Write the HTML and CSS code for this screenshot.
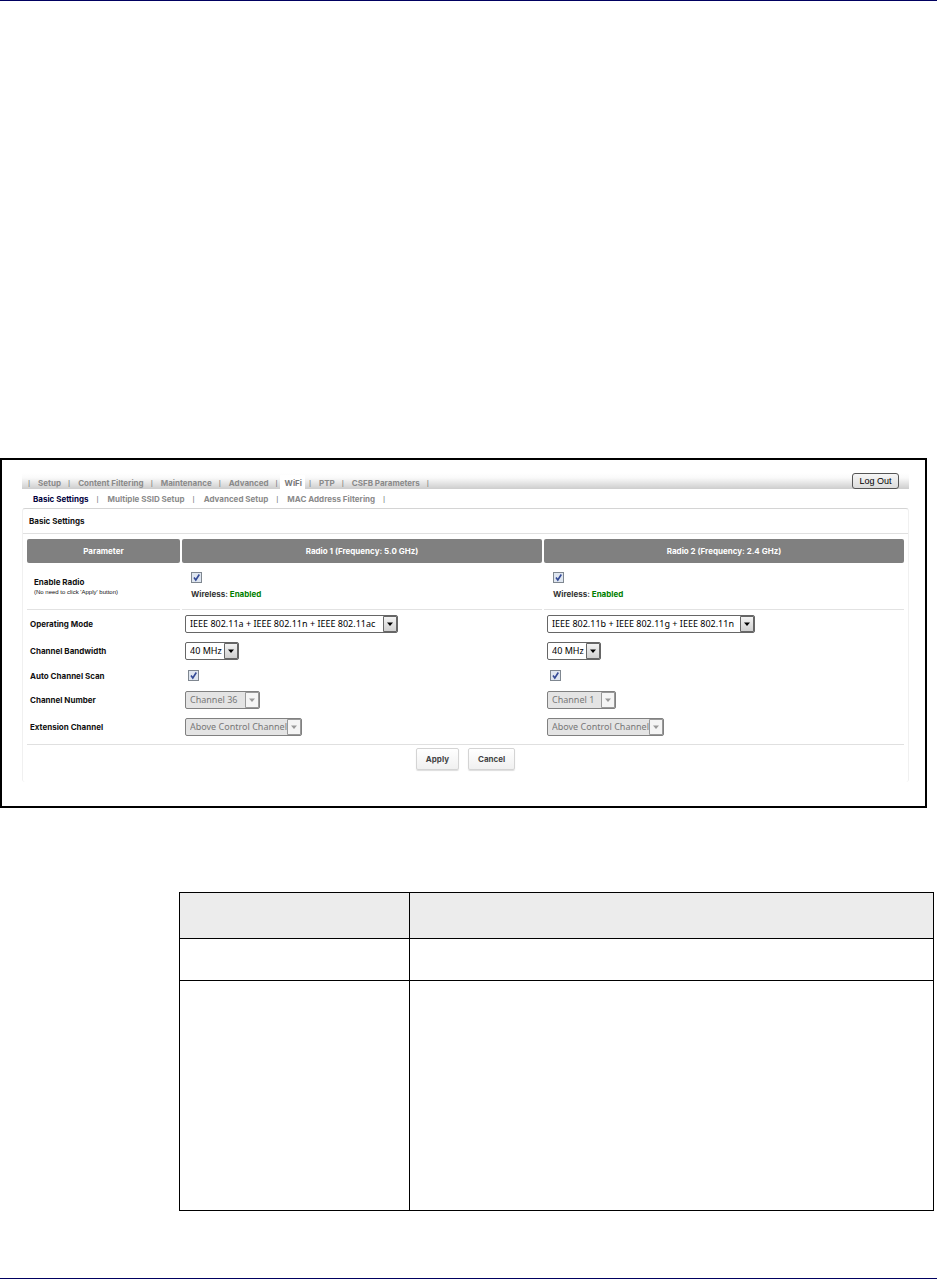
FILE: index.html
```html
<!DOCTYPE html>
<html lang="en">
<head>
<meta charset="utf-8">
<title>WiFi - Basic Settings</title>
<link rel="stylesheet" href="styles.css">
</head>
<body>
<main class="sheet">
  <section class="frame">
    <header class="topbar">
      <nav class="tabs" aria-label="Main">
        <a href="#">Setup</a>
        <a href="#">Content Filtering</a>
        <a href="#">Maintenance</a>
        <a href="#">Advanced</a>
        <a href="#" class="active">WiFi</a>
        <a href="#">PTP</a>
        <a href="#">CSFB Parameters</a>
      </nav>
      <button type="button" class="logout">Log Out</button>
    </header>
    <nav class="subtabs" aria-label="WiFi">
      <a href="#" class="current">Basic Settings</a>
      <a href="#">Multiple SSID Setup</a>
      <a href="#">Advanced Setup</a>
      <a href="#">MAC Address Filtering</a>
    </nav>
    <form class="panel">
      <h1 class="title">Basic Settings</h1>
      <table class="settings">
        <thead>
          <tr><th class="param">Parameter</th><th id="r1">Radio 1 (Frequency: 5.0 GHz)</th><th id="r2">Radio 2 (Frequency: 2.4 GHz)</th></tr>
        </thead>
        <tbody>
          <tr class="enable">
            <th id="en">Enable Radio<small>(No need to click 'Apply' button)</small></th>
            <td><input type="checkbox" class="check" aria-labelledby="en r1" checked><p>Wireless: <b>Enabled</b></p></td>
            <td><input type="checkbox" class="check" aria-labelledby="en r2" checked><p>Wireless: <b>Enabled</b></p></td>
          </tr>
          <tr class="first">
            <th id="om">Operating Mode</th>
            <td><select class="wide" aria-labelledby="om r1"><option>IEEE 802.11a + IEEE 802.11n + IEEE 802.11ac</option></select></td>
            <td><select class="wide" aria-labelledby="om r2"><option>IEEE 802.11b + IEEE 802.11g + IEEE 802.11n</option></select></td>
          </tr>
          <tr>
            <th id="bw">Channel Bandwidth</th>
            <td><select class="narrow" aria-labelledby="bw r1"><option>40 MHz</option></select></td>
            <td><select class="narrow" aria-labelledby="bw r2"><option>40 MHz</option></select></td>
          </tr>
          <tr class="scan">
            <th id="sc">Auto Channel Scan</th>
            <td><input type="checkbox" class="check" aria-labelledby="sc r1" checked></td>
            <td><input type="checkbox" class="check" aria-labelledby="sc r2" checked></td>
          </tr>
          <tr>
            <th id="cn">Channel Number</th>
            <td><select class="number" aria-labelledby="cn r1" disabled><option>Channel 36</option></select></td>
            <td><select class="digit" aria-labelledby="cn r2" disabled><option>Channel 1</option></select></td>
          </tr>
          <tr class="last">
            <th id="ex">Extension Channel</th>
            <td><select class="medium" aria-labelledby="ex r1" disabled><option>Above Control Channel</option></select></td>
            <td><select class="medium" aria-labelledby="ex r2" disabled><option>Above Control Channel</option></select></td>
          </tr>
        </tbody>
      </table>
      <div class="actions">
        <button type="button">Apply</button>
        <button type="button">Cancel</button>
      </div>
    </form>
  </section>
  <table class="reference">
    <thead><tr class="head"><th></th><th></th></tr></thead>
    <tbody>
      <tr class="short"><td></td><td></td></tr>
      <tr class="tall"><td></td><td></td></tr>
    </tbody>
  </table>
</main>
</body>
</html>
```

FILE: styles.css
```css
* { box-sizing: border-box; }

body {
  margin: 0;
  background: #fff;
  font: bold 8px/12px Inter, "Liberation Sans", sans-serif;
  color: #111;
}

.sheet {
  min-height: 100vh;
  padding: 457px 0 66px;
  border-top: 1px solid #000060;
  border-bottom: 1px solid #000060;
}

.frame {
  margin-right: 10px;
  padding: 13px 16px 24px 20px;
  border: 2px solid #000;
}

.topbar {
  display: flex;
  justify-content: space-between;
  align-items: flex-start;
  height: 16px;
  padding-right: 10px;
  background: linear-gradient(#fff 0, #fafafa 30%, #cdcdcd 100%);
}

.tabs, .subtabs { display: flex; }

.tabs a, .subtabs a {
  display: flex;
  color: #8a8a8a;
  text-decoration: none;
  white-space: nowrap;
}

.tabs { padding: 2px 0 0 6px; }
.tabs::before,
.tabs a::after,
.subtabs a::after {
  content: "|";
  font-family: "Liberation Sans", sans-serif;
  font-weight: normal;
  color: #777;
}
.tabs a, .tabs::before { height: 14px; line-height: 16px; }
.tabs a { padding-left: 8px; }
.tabs a::after { padding-left: 7px; }
.tabs .active {
  margin-left: 2px;
  padding-left: 5px;
  background: linear-gradient(90deg, #fff 25px, transparent 25px);
  color: #777;
}

.logout {
  height: 16px;
  width: 47px;
  padding: 0;
  border: 1px solid #555;
  border-radius: 3px;
  background: linear-gradient(#f6f6f6, #dcdcdc);
  font: 9px/12px "Liberation Sans", sans-serif;
  color: #000;
}

.subtabs { padding: 4px 0 3px 11px; }
.subtabs a { margin-right: 9px; }
.subtabs a::after { padding-left: 8px; }
.subtabs .current { color: #00003c; }

.panel {
  border: 1px solid #f0f0f0;
  border-top-color: #d4d4d4;
  border-bottom: 0;
  border-radius: 3px;
}

.title {
  margin: 0;
  padding: 6px;
  border-bottom: 1px solid #e0e0e0;
  font-size: 8px;
  line-height: 12px;
}

.settings {
  width: calc(100% - 4px);
  margin: 5px 2px 0;
  table-layout: fixed;
  border-collapse: separate;
  border-spacing: 2px 0;
}

.settings thead th {
  height: 24px;
  padding: 0;
  border-radius: 2px;
  background: #808080;
  color: #fff;
}
.settings .param { width: 153px; }

.settings tbody th, .settings td { padding: 0 0 0 3px; height: 26px; text-align: left; }
.settings .enable th, .settings .enable td {
  height: 47px;
  padding-left: 7px;
  border-bottom: 1px solid #e2e2e2;
}
.settings .enable td { padding-left: 9px; }
.settings .enable p { margin: 5px 0 0; color: #333; }
.settings b { font-weight: 700; color: #008000; }
.settings small {
  display: block;
  font: 6px/9px "Liberation Sans", sans-serif;
}
.settings .first th, .settings .first td { height: 28px; }
.settings .scan th, .settings .scan td { height: 23px; }
.settings .scan td { padding-left: 6px; }
.settings .last th, .settings .last td { height: 27px; }

.check {
  display: block;
  appearance: none;
  width: 11px;
  height: 11px;
  margin: 0;
  border: 1px solid #7f8790;
  background: #dfe6f0 url("data:image/svg+xml,%3Csvg xmlns='http://www.w3.org/2000/svg' viewBox='0 0 9 9'%3E%3Cpath d='M2 4.5L3.8 7L7.3 1.5' fill='none' stroke='%23344a96' stroke-width='1.6'/%3E%3C/svg%3E") center / 9px 9px;
}

select {
  display: block;
  appearance: none;
  height: 18px;
  margin: 0;
  padding: 0 14px 0 4px;
  border: 1px solid #666;
  border-radius: 2px;
  background: #fff url("data:image/svg+xml,%3Csvg xmlns='http://www.w3.org/2000/svg' width='14' height='16'%3E%3Cdefs%3E%3ClinearGradient id='g' x2='0' y2='1'%3E%3Cstop stop-color='%23f4f4f4'/%3E%3Cstop offset='1' stop-color='%23cfcfcf'/%3E%3C/linearGradient%3E%3C/defs%3E%3Cpath d='M.5.5h13v15H.5z' fill='url(%23g)' stroke='%23666'/%3E%3Cpath d='M4 6.5h6L7 10z'/%3E%3C/svg%3E") right center no-repeat;
  font: 9px/14px "Noto Sans", sans-serif;
  color: #000;
}
select:disabled {
  border-color: #808080;
  background: #e4e4e4 url("data:image/svg+xml,%3Csvg xmlns='http://www.w3.org/2000/svg' width='14' height='16'%3E%3Cpath d='M.5.5h13v15H.5z' fill='%23f5f5f5' stroke='%23999'/%3E%3Cpath d='M4 6.5h6L7 10z' fill='%23999'/%3E%3C/svg%3E") right center no-repeat;
  color: #777;
  opacity: 1;
}
.wide { width: 213px; }
td:last-child .wide { width: 208px; }
.narrow { width: 54px; }
.number { width: 75px; }
.digit { width: 69px; }
.medium { width: 117px; }

.actions {
  display: flex;
  justify-content: center;
  gap: 9px;
  margin: 4px 4px 0;
  padding: 3px 0 12px;
  border-top: 1px solid #e0e0e0;
}
.actions button {
  height: 22px;
  padding: 0 9px;
  border: 1px solid #d4d4d4;
  border-radius: 2px;
  background: linear-gradient(#fff, #f0f0f0);
  box-shadow: 0 1px 1px #ddd;
  font: inherit;
  color: #444;
}

.reference {
  width: calc(100% - 182px);
  margin: 84px 0 0 179px;
  table-layout: fixed;
  border-collapse: collapse;
}
.reference th, .reference td { padding: 0; border: 1px solid #000; }
.reference th:first-child { width: 230px; }
.reference .head { height: 46px; background: #ececec; }
.reference .short { height: 42px; }
.reference .tall { height: 230px; }
```
